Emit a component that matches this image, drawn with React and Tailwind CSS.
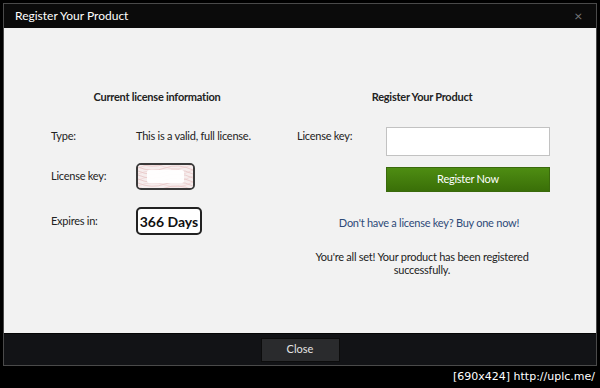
import React from 'react';

const font = { fontFamily: 'Lato, "Noto Sans", sans-serif' };

const KeyPattern = () => (
  <svg width="55" height="23" viewBox="0 0 55 23" className="block">
    <rect width="55" height="23" fill="#f6eded" />
    {[0, 4, 8, 12, 16, 20, 24].map((o) => (
      <path
        key={o}
        d={`M0 ${o - 2} Q14 ${o + 4} 27 ${o - 1} T55 ${o + 1}`}
        fill="none"
        stroke="#e2b9b9"
        strokeWidth="0.6"
      />
    ))}
    {[0, 6, 12, 18, 24].map((o) => (
      <path
        key={'b' + o}
        d={`M0 ${o + 3} Q14 ${o - 3} 27 ${o + 2} T55 ${o - 1}`}
        fill="none"
        stroke="#ecc9c9"
        strokeWidth="0.5"
      />
    ))}
    <rect x="9" y="5" width="37" height="13" rx="2" fill="#ffffff" opacity="0.95" />
  </svg>
);

const App = () => {
  return (
    <div className="w-[600px] h-[388px] bg-black pt-[3px] pl-[3px] text-[11px] tracking-[-0.25px] text-[#222]" style={font}>
      <div className="w-[594px] h-[363px] border border-[#4a4a4a] flex flex-col">
        {/* title bar */}
        <div className="h-[24px] bg-[#0b0b0b] flex items-center justify-between pl-[11px] pr-[14px]">
          <span className="text-[12px] tracking-normal text-white leading-none">Register Your Product</span>
          <span className="text-[14px] text-[#777] leading-none">×</span>
        </div>

        {/* content */}
        <div className="h-[305px] bg-[#f2f2f2] flex">
          <div className="w-[286px] flex flex-col">
            <div className="w-[306px] mt-[61px] h-[16px] leading-[16px] text-center font-bold">
              Current license information
            </div>
            <div className="mt-[23px] h-[16px] flex items-center pl-[47px]">
              <span className="w-[85px]">Type:</span>
              <span>This is a valid, full license.</span>
            </div>
            <div className="mt-[19px] h-[27px] flex items-center pl-[47px]">
              <span className="w-[85px]">License key:</span>
              <div className="w-[59px] h-[27px] border-2 border-[#3a3a3a] rounded-[5px] overflow-hidden bg-white">
                <KeyPattern />
              </div>
            </div>
            <div className="mt-[17px] h-[28px] flex items-center pl-[47px]">
              <span className="w-[85px]">Expires in:</span>
              <div className="w-[66px] h-[28px] border-2 border-[#222] rounded-[5px] bg-white flex items-center justify-center text-[14px] tracking-normal font-bold text-[#111]">
                366 Days
              </div>
            </div>
          </div>

          <div className="w-[264px] flex flex-col">
            <div className="mt-[61px] h-[16px] leading-[16px] text-center font-bold">
              Register Your Product
            </div>
            <div className="mt-[22px] flex items-start pl-[7px]">
              <span className="w-[89px] mt-[1px] leading-[16px]">License key:</span>
              <div className="w-[164px] h-[29px] bg-white border border-[#c2c2c2]" />
            </div>
            <div className="mt-[11px] ml-[96px] w-[164px] h-[25px] bg-gradient-to-b from-[#4e8d12] to-[#3a6f08] border border-[#3a6a0c] flex items-center justify-center text-white">
              Register Now
            </div>
            <div className="mt-[23px] pl-[14px] h-[16px] leading-[16px] text-center text-[#2e4a78]">
              Don't have a license key? Buy one now!
            </div>
            <div className="mt-[19px] leading-[13px] text-center">
              You're all set! Your product has been registered
              <br />
              successfully.
            </div>
          </div>
        </div>

        {/* footer */}
        <div className="flex-1 bg-[#121316] border-t border-[#050505] flex items-center justify-center">
          <div className="w-[79px] h-[24px] bg-[#2a2b2d] border border-[#0c0c0c] flex items-center justify-center text-[#e4e4e4] text-[11px] tracking-normal">
            Close
          </div>
        </div>
      </div>
      <div className="w-[592px] text-right text-white text-[11px] tracking-normal leading-[16px] mt-[3px]" style={{ fontFamily: '"DejaVu Sans", sans-serif' }}>
        [690x424] http://uplc.me/
      </div>
    </div>
  );
};

export default App;
